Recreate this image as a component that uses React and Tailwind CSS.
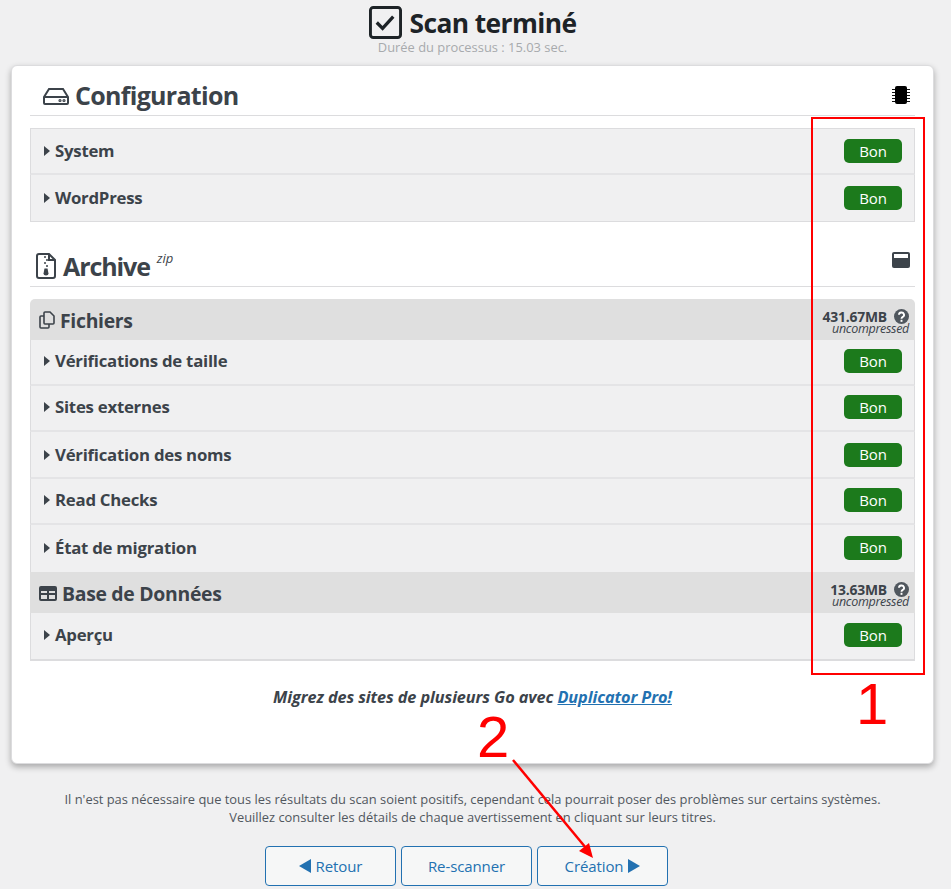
import React from 'react';

const font = "font-['Open_Sans','Noto_Sans',sans-serif]";

const Caret = () => (
  <svg viewBox="0 0 6 10" className="w-[6px] h-[10px] mr-[5px] shrink-0 text-[#3c434a]" fill="currentColor">
    <path d="M0 0 L6 5 L0 10 Z" />
  </svg>
);

const Row = ({ label, last, up, h = 'h-[46px]' }) => (
  <div className={`flex items-center justify-between ${h} pl-[13px] pr-[12px] bg-[#f0f0f1] border-x border-[#dcdcde] ${up ? 'pb-[2px]' : ''} ${last ? '' : 'border-b-2 border-b-[#e4e4e6]'}`}>
    <div className="flex items-center text-[16.8px] font-bold text-[#3c434a] tracking-[-0.25px]">
      <Caret />
      {label}
    </div>
    <span className="flex items-center justify-center w-[58px] h-[24px] rounded-[5px] bg-[#1c7a1c] text-white text-[15px] tracking-[-0.1px]">Bon</span>
  </div>
);

const Help = () => (
  <svg viewBox="0 0 16 16" className="w-[15px] h-[15px]" fill="none">
    <circle cx="8" cy="8" r="8" fill="#50575e" />
    <path d="M5.3 6.2 a2.7 2.5 0 1 1 4 2.2 c-1 .6 -1.3 1 -1.3 1.9" stroke="#fff" strokeWidth="2" />
    <rect x="7" y="11.5" width="2" height="2.2" fill="#fff" />
  </svg>
);

const GroupHead = ({ icon, label, size, rounded }) => (
  <div className={`flex items-center justify-between h-[41px] pl-[9px] pr-[6px] bg-[#dfdfdf] ${rounded ? 'rounded-t-[5px]' : ''}`}>
    <div className="flex items-center gap-[5px] pt-[2px] text-[19.4px] font-bold text-[#3c434a] tracking-[-0.3px]">
      {icon}
      {label}
    </div>
    <div className="text-right text-[#3c434a] pt-[5px]">
      <div className="flex items-center justify-end gap-[7px] text-[13.9px] leading-[13px] font-bold tracking-[-0.2px] h-[13px]">
        {size}
        <Help />
      </div>
      <div className="text-[12.5px] leading-[11px] italic tracking-[-0.3px]">uncompressed</div>
    </div>
  </div>
);

const DriveIcon = () => (
  <svg viewBox="0 0 26 18" className="w-[26px] h-[18px] text-[#3c434a]" fill="none" stroke="currentColor" strokeWidth="2">
    <path d="M1 10 L6 2 H20 L25 10 V16 a1 1 0 0 1 -1 1 H2 a1 1 0 0 1 -1 -1 Z" />
    <path d="M1 10 H25" />
    <circle cx="17" cy="13.5" r="0.6" />
    <circle cx="21" cy="13.5" r="0.6" />
  </svg>
);

const ChipIcon = () => (
  <svg viewBox="0 0 20 20" className="w-[20px] h-[20px]" fill="none" stroke="#111" strokeWidth="1">
    <rect x="4" y="1" width="12" height="18" rx="2" fill="#000" stroke="none" />
    <path d="M1 4.5 H4 M1 7.5 H4 M1 10.5 H4 M1 13.5 H4 M1 16.5 H4 M16 4.5 H19 M16 7.5 H19 M16 10.5 H19 M16 13.5 H19 M16 16.5 H19" />
  </svg>
);

const ZipIcon = () => (
  <svg viewBox="0 0 20 26" className="w-[20px] h-[26px] text-[#3c434a]" fill="none" stroke="currentColor" strokeWidth="2">
    <path d="M3 1 H13 L19 7 V23 a2 2 0 0 1 -2 2 H3 a2 2 0 0 1 -2 -2 V3 a2 2 0 0 1 2 -2 Z" />
    <path d="M13 1 V7 H19" />
    <path d="M8 4 H10 M10 7 H12 M8 10 H10 M10 13 H12" strokeWidth="1.6" />
    <path d="M8.5 15.5 H11.5 L12.5 20.5 a2.5 2 0 0 1 -5 0 Z" fill="currentColor" stroke="none" />
  </svg>
);

const WindowIcon = () => (
  <svg viewBox="0 0 18 16" className="w-[18px] h-[16px] text-[#3c434a]">
    <rect x="0" y="0" width="18" height="16" rx="2" fill="currentColor" />
    <rect x="2" y="2" width="14" height="4" fill="#fff" />
  </svg>
);

const CopyIcon = () => (
  <svg viewBox="0 0 16 18" className="w-[16px] h-[18px] text-[#3c434a]" fill="none" stroke="currentColor" strokeWidth="1.6">
    <path d="M6 1 H11 L15 5 V12 a1 1 0 0 1 -1 1 H6 a1 1 0 0 1 -1 -1 V2 a1 1 0 0 1 1 -1 Z" />
    <path d="M5 5 H2 a1 1 0 0 0 -1 1 V16 a1 1 0 0 0 1 1 H9 a1 1 0 0 0 1 -1 V13" />
  </svg>
);

const TableIcon = () => (
  <svg viewBox="0 0 18 15" className="w-[18px] h-[15px] text-[#3c434a]">
    <path fill="currentColor" fillRule="evenodd" d="M2 0 H16 a2 2 0 0 1 2 2 V13 a2 2 0 0 1 -2 2 H2 a2 2 0 0 1 -2 -2 V2 a2 2 0 0 1 2 -2 Z M2 5 V7 H8 V5 Z M10 5 V7 H16 V5 Z M2 9 V13 H8 V9 Z M10 9 V13 H16 V9 Z" />
  </svg>
);

const Button = ({ children }) => (
  <button className="flex items-center justify-center gap-[5px] w-[131px] h-[40px] border border-[#2271b1] rounded-[4px] bg-[#f6f7f7] text-[#2271b1] text-[15px] tracking-[-0.1px]">
    {children}
  </button>
);

const Tri = ({ left }) => (
  <svg viewBox="0 0 12 14" className="w-[12px] h-[14px]" fill="currentColor">
    <path d={left ? 'M12 0 V14 L0 7 Z' : 'M0 0 V14 L12 7 Z'} />
  </svg>
);

const App = () => {
  return (
    <div className={`relative w-[951px] h-[889px] overflow-hidden bg-[#f0f0f1] ${font}`}>
      <div className="w-[945px]">
        {/* Header */}
        <div className="flex flex-col items-center pt-[4px] h-[65px]">
          <div className="flex items-center gap-[8px] h-[36px]">
            <svg viewBox="0 0 34 34" className="w-[33px] h-[33px] text-[#1d2327]" fill="none" stroke="currentColor">
              <rect x="1.5" y="1.5" width="31" height="31" rx="3" strokeWidth="3" />
              <path d="M8 17 L14 23 L25 11" strokeWidth="3.4" />
            </svg>
            <h1 className="pt-[3px] text-[26.4px] font-bold text-[#1d2327] tracking-[-0.6px]">Scan terminé</h1>
          </div>
          <p className="text-[12.9px] text-[#a7aaad] leading-[14px]">Durée du processus : 15.03 sec.</p>
        </div>

        {/* Card */}
        <div className="mx-[11px] h-[699px] bg-white rounded-[6px] border border-[#dcdcde] shadow-[0_3px_6px_rgba(0,0,0,0.3)] px-[18px]">
          <div className="flex items-center justify-between h-[50px] border-b border-[#dcdcde] pl-[13px] pr-[4px] pt-[9px]">
            <div className="flex items-center gap-[6px] pt-[2px] text-[25px] font-bold text-[#3c434a] tracking-[-0.7px]">
              <DriveIcon />
              Configuration
            </div>
            <ChipIcon />
          </div>

          <div className="mt-[12px] border-t border-[#dcdcde]">
            <Row label="System" />
            <Row label="WordPress" last />
            <div className="border-t border-[#dcdcde]" />
          </div>

          <div className="flex items-center justify-between mt-[19px] h-[46px] border-b border-[#dcdcde] pl-[6px] pr-[5px] pt-[5px]">
            <div className="flex items-center gap-[7px] text-[25px] font-bold text-[#3c434a] tracking-[-1.1px]">
              <ZipIcon />
              <span className="pt-[2px]">Archive</span>
              <sup className="text-[13px] font-normal italic -mt-[4px] tracking-normal">zip</sup>
            </div>
            <div className="-mt-[12px]">
              <WindowIcon />
            </div>
          </div>

          <div className="mt-[12px]">
            <GroupHead icon={<CopyIcon />} label="Fichiers" size="431.67MB" rounded />
            <Row label="Vérifications de taille" up />
            <Row label="Sites externes" up />
            <Row label="Vérification des noms" h="h-[47px]" />
            <Row label="Read Checks" up />
            <Row label="État de migration" h="h-[47px]" up last />
            <GroupHead icon={<TableIcon />} label="Base de Données" size="13.63MB" />
            <Row label="Aperçu" up last />
            <div className="border-t-2 border-[#dcdcde]" />
          </div>

          <p className="mt-[24px] text-center text-[16.3px] font-bold italic text-[#3c434a] tracking-[-0.1px]">
            Migrez des sites de plusieurs Go avec <a className="text-[#2271b1] underline">Duplicator Pro!</a>
          </p>
        </div>

        {/* Footer */}
        <div className="mt-[26px] text-center text-[12.9px] leading-[18px] text-[#50575e]">
          <p>Il n'est pas nécessaire que tous les résultats du scan soient positifs, cependant cela pourrait poser des problèmes sur certains systèmes.</p>
          <p>Veuillez consulter les détails de chaque avertissement en cliquant sur leurs titres.</p>
        </div>
        <div className="mt-[20px] mr-[12px] flex justify-center gap-[5px]">
          <Button><Tri left /> Retour</Button>
          <Button>Re-scanner</Button>
          <Button>Création <Tri /></Button>
        </div>
      </div>

      {/* Annotations */}
      <div className="absolute left-[811px] top-[117px] w-[114px] h-[558px] border-2 border-[#ff0000]" />
      <div className="absolute left-[856px] top-[675px] text-[58px] leading-[58px] text-[#ff0000] font-['Liberation_Sans',sans-serif]">1</div>
      <div className="absolute left-[477px] top-[708px] text-[58px] leading-[58px] text-[#ff0000] font-['Liberation_Sans',sans-serif]">2</div>
      <svg className="absolute left-0 top-0 pointer-events-none" width="951" height="889" viewBox="0 0 951 889" fill="none">
        <path d="M513 760 L586 848" stroke="#ff0000" strokeWidth="2.5" />
        <path d="M593 858 L579 851 L589 843 Z" fill="#ff0000" />
      </svg>
    </div>
  );
};

export default App;
